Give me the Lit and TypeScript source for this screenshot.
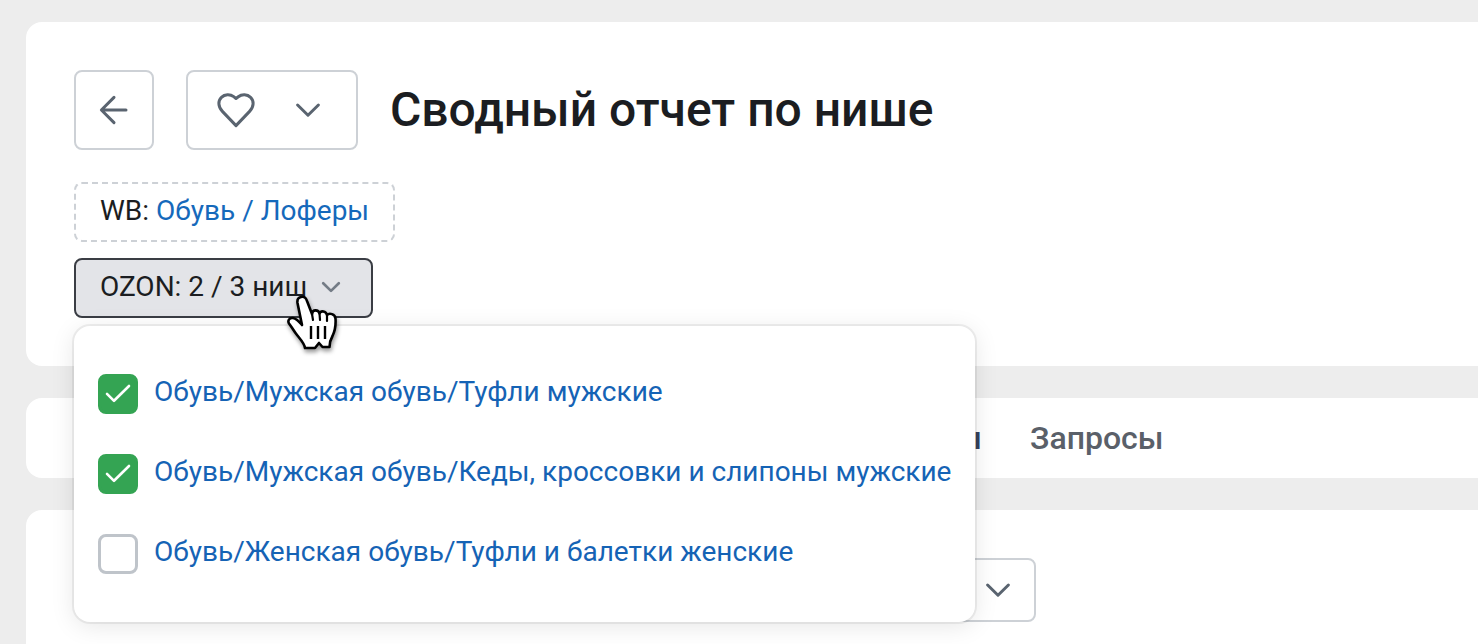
import { LitElement, html, css, svg } from "lit";
import { customElement, state } from "lit/decorators.js";

interface Niche {
  id: string;
  title: string;
  checked: boolean;
}

const chevron = (size: number) => html`
  <svg class="icon" width=${size} height=${size} viewBox="0 0 32 32" aria-hidden="true">
    ${svg`<path d="M5.6 11 L16 21.2 L26.4 11" />`}
  </svg>
`;

@customElement("niche-menu")
export class NicheMenu extends LitElement {
  @state() private niches: Niche[] = [
    { id: "shoes", title: "Обувь/Мужская обувь/Туфли мужские", checked: true },
    { id: "sneakers", title: "Обувь/Мужская обувь/Кеды, кроссовки и слипоны мужские", checked: true },
    { id: "flats", title: "Обувь/Женская обувь/Туфли и балетки женские", checked: false },
  ];

  static styles = css`
    :host {
      display: block;
      box-sizing: border-box;
      width: max-content;
      padding: 48px 24px;
      background: #fff;
      border-radius: 16px;
      box-shadow: 0 0 0 2px rgba(0, 0, 0, 0.06), 0 4px 24px rgba(0, 0, 0, 0.1);
    }
    .list {
      display: grid;
      gap: 40px;
      margin: 0;
      padding: 0;
      list-style: none;
    }
    .row {
      display: flex;
      align-items: center;
      gap: 16px;
    }
    .box {
      display: grid;
      width: 40px;
      height: 40px;
    }
    .box > * {
      grid-area: 1 / 1;
    }
    .input {
      appearance: none;
      box-sizing: border-box;
      width: 40px;
      height: 40px;
      margin: 0;
      border: 3px solid #bfc4ca;
      border-radius: 8px;
      background: #fff;
    }
    .input:checked {
      border-color: #34a453;
      background: #34a453;
    }
    .tick {
      pointer-events: none;
      fill: none;
      stroke: #fff;
      stroke-width: 2.6;
      stroke-linecap: round;
      stroke-linejoin: round;
    }
    .label {
      padding-bottom: 4px;
      color: #1563b5;
      font-size: 28px;
      line-height: 36px;
      white-space: nowrap;
    }
  `;

  private toggle(id: string) {
    this.niches = this.niches.map((n) => (n.id === id ? { ...n, checked: !n.checked } : n));
  }

  render() {
    return html`
      <ul class="list">
        ${this.niches.map(
          (n) => html`
            <li class="row">
              <span class="box">
                <input
                  class="input"
                  type="checkbox"
                  id=${n.id}
                  .checked=${n.checked}
                  @change=${() => this.toggle(n.id)}
                />
                ${n.checked
                  ? html`<svg class="tick" width="40" height="40" viewBox="0 0 40 40" aria-hidden="true">
                      <path d="M9 19.8 L16 26.8 L31 12" />
                    </svg>`
                  : null}
              </span>
              <label class="label" for=${n.id}>${n.title}</label>
            </li>
          `
        )}
      </ul>
    `;
  }
}

@customElement("app-root")
export class AppRoot extends LitElement {
  static styles = css`
    :host {
      display: block;
      box-sizing: border-box;
      height: 100vh;
      overflow: hidden;
      padding: 22px 0 0 26px;
      background: #ededed;
      color: #1b1d21;
      font-family: Roboto, "Liberation Sans", sans-serif;
      font-size: 28px;
      line-height: 36px;
    }
    .page {
      display: flex;
      flex-direction: column;
      gap: 32px;
      min-height: 100%;
    }
    .card {
      background: #fff;
      border-radius: 16px 0 0 16px;
    }
    .header {
      display: flex;
      flex-direction: column;
      align-items: flex-start;
      padding: 48px;
    }
    .bar {
      display: flex;
      align-items: center;
      gap: 32px;
      margin-bottom: 32px;
    }
    .title {
      margin: 0;
      font-size: 48px;
      font-weight: 500;
      line-height: 64px;
      white-space: nowrap;
    }
    .button {
      display: flex;
      align-items: center;
      justify-content: center;
      box-sizing: border-box;
      padding: 0;
      border: 2px solid #cdd1d6;
      border-radius: 8px;
      background: #fff;
      color: inherit;
      font: inherit;
    }
    .square {
      width: 80px;
      height: 80px;
    }
    .favourite {
      gap: 36px;
      height: 80px;
      padding: 0 32px 0 28px;
    }
    .icon {
      display: block;
      fill: none;
      stroke: #5a6470;
      stroke-width: 3;
      stroke-linecap: round;
      stroke-linejoin: round;
    }
    .chip {
      box-sizing: border-box;
      height: 60px;
      margin-bottom: 16px;
      padding: 9px 24px;
      border: 2px dashed #cdd1d6;
      border-radius: 8px;
    }
    .link {
      color: #1569bb;
      text-decoration: none;
    }
    .picker {
      position: relative;
    }
    .trigger {
      gap: 12px;
      height: 60px;
      padding: 0 28px 2px 24px;
      border-color: #3a3d44;
      background: #e3e4e8;
    }
    .trigger .icon {
      stroke: #747c86;
      stroke-width: 3.6;
    }
    .menu {
      position: absolute;
      z-index: 1;
      top: calc(100% + 8px);
      left: 0;
    }
    .cursor {
      position: absolute;
      z-index: 2;
      top: 36px;
      right: 32px;
      overflow: visible;
      pointer-events: none;
      filter: drop-shadow(1px 3px 2px rgba(0, 0, 0, 0.4));
    }
    .tabs {
      display: flex;
      align-items: center;
      gap: 48px;
      height: 80px;
      padding: 0 48px;
      font-size: 32px;
      line-height: 40px;
      font-weight: 500;
    }
    .tab {
      color: #5a6069;
      text-decoration: none;
    }
    .current {
      width: 908px;
      color: #36415c;
      text-align: right;
    }
    .body {
      flex: 1;
      padding: 48px 72px;
    }
    .select {
      justify-content: flex-end;
      width: 938px;
      height: 64px;
      padding: 0 20px;
    }
  `;

  render() {
    return html`
      <main class="page">
        <header class="card header">
          <div class="bar">
            <button class="button square" type="button" aria-label="Назад">
              <svg class="icon" width="32" height="32" viewBox="0 0 32 32" aria-hidden="true">
                <path d="M28 16 H4 M16 3.4 L3.4 16 L16 28.6" />
              </svg>
            </button>
            <button class="button favourite" type="button" aria-label="Избранное">
              <svg class="icon" width="40" height="40" viewBox="0 0 40 40" aria-hidden="true">
                <path
                  d="M20 35.6 L6.4 21.4 C1.9 16.7 1.9 10.800 5.400 7.400 C8.800 3.900 14.200 3.900 17.700 6.700 L20 8.500 L22.300 6.700 C25.800 3.900 31.200 3.900 34.600 7.400 C38.100 10.800 38.100 16.700 33.600 21.400 Z"
                />
              </svg>
              ${chevron(32)}
            </button>
            <h1 class="title">Сводный отчет по нише</h1>
          </div>
          <div class="chip">WB: <a class="link" href="#loafers">Обувь / Лоферы</a></div>
          <div class="picker">
            <button class="button trigger" type="button" aria-expanded="true">
              <span>OZON: 2 / 3 ниш</span>
              ${chevron(24)}
            </button>
            <niche-menu class="menu"></niche-menu>
            <svg class="cursor" width="54" height="56" viewBox="0 0 54 56" aria-hidden="true">
              <path
                d="M14 3 C17.5 2 19 4 20 7 L25 20 C25.5 15 31.5 15.5 32.5 19.5 C34 16 39 17 40 21 C42.5 18.5 48 20 48.5 24.5 C49 32 48.5 36 45.5 42 C43.5 45.5 42.5 48 42.5 53 L35.5 53 L32 49 L28 54 L18 54 C17.5 49 12 44 8.5 39 C6 35.5 4 32 2 29.5 C0.5 27 2 23.5 6 24 C9.5 24.5 12 27.5 15 31 L10.5 9 C10 5.5 11.5 3.5 14 3 Z"
                fill="#fff"
                stroke="#000"
                stroke-width="2.6"
                stroke-linejoin="round"
              />
              <path
                d="M25 20 L26 26 M32.5 19.5 L33 26 M40 21 L40 27"
                fill="none"
                stroke="#000"
                stroke-width="2.2"
                stroke-linecap="round"
              />
              <path d="M24 32 V45 M31 32 V45 M38 32 V45" fill="none" stroke="#000" stroke-width="2.4" />
            </svg>
          </div>
        </header>
        <nav class="card tabs">
          <a class="tab current" href="#goods">Товары</a>
          <a class="tab" href="#queries">Запросы</a>
        </nav>
        <section class="card body">
          <button class="button select" type="button" aria-label="Период">${chevron(32)}</button>
        </section>
      </main>
    `;
  }
}
